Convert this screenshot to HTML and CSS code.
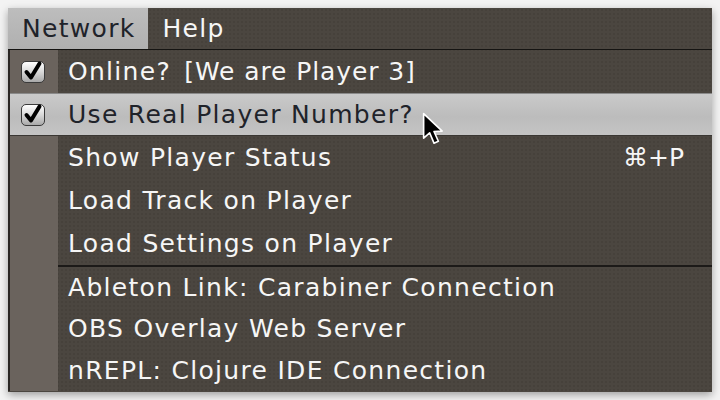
FILE: index.html
```html
<!DOCTYPE html>
<html lang="en">
  <head>
    <meta charset="UTF-8" />
    <meta name="viewport" content="width=device-width, initial-scale=1.0" />
    <title>Network Menu</title>
    <link rel="stylesheet" href="styles.css">
  </head>
  <body>
    <div class="window">
      <div class="menubar">
        <span class="menubar-item open">Network</span>
        <span class="menubar-item">Help</span>
      </div>

      <ul class="menu">
        <li class="menu-item">
          <span class="gutter"><span class="checkbox"><svg viewBox="0 0 22 20"><path d="M4.5 10 L9 15.5 L17.5 1.5" /></svg></span></span>
          <span class="label">Online? <span class="tight">[We are Player 3]</span></span>
        </li>
        <li class="menu-item active">
          <span class="gutter"><span class="checkbox"><svg viewBox="0 0 22 20"><path d="M4.5 10 L9 15.5 L17.5 1.5" /></svg></span></span>
          <span class="label">Use Real Player Number?</span>
        </li>
        <li class="menu-item">
          <span class="gutter"></span>
          <span class="label">Show Player Status</span>
          <span class="shortcut">&#8984;+P</span>
        </li>
        <li class="menu-item">
          <span class="gutter"></span>
          <span class="label">Load Track on Player</span>
        </li>
        <li class="menu-item">
          <span class="gutter"></span>
          <span class="label">Load Settings on Player</span>
        </li>
        <!-- separator -->
        <li class="menu-item sep small">
          <span class="gutter"></span>
          <span class="label">Ableton Link: Carabiner Connection</span>
        </li>
        <li class="menu-item small">
          <span class="gutter"></span>
          <span class="label">OBS Overlay Web Server</span>
        </li>
        <li class="menu-item small">
          <span class="gutter"></span>
          <span class="label">nREPL: Clojure IDE Connection</span>
        </li>
      </ul>

      <svg class="cursor" viewBox="0 0 22 32" width="24" height="35">
        <path d="M1.5 1.5 L1.5 24 L7 19 L11 28.5 L15 26.8 L11 17.8 L18.5 17.5 Z" />
      </svg>
    </div>
  </body>
</html>
```

FILE: styles.css
```css
* {
  margin: 0;
  padding: 0;
  box-sizing: border-box;
}

body {
  background-color: #f3f3f3;
  font-family: "DejaVu Sans", "Liberation Sans", sans-serif;
  font-size: 25px;
  letter-spacing: 1.3px;
}

.window {
  position: relative;
  width: 704px;
  height: 384px;
  margin: 8px;
  background-color: #4b4640;
  background-image: radial-gradient(rgba(0, 0, 0, 0.07) 1px, transparent 1.2px);
  background-size: 4px 4px;
  box-shadow: 0 3px 8px rgba(0, 0, 0, 0.35);
  overflow: hidden;
}

.menubar {
  display: flex;
  height: 42px;
  border-bottom: 1px solid #151412;
}

.menubar-item {
  display: flex;
  align-items: center;
  padding: 0 13px 0 14px;
  color: #f6f6f6;
}

.menubar-item.open {
  background: linear-gradient(#bdbdbd, #b0b0b0);
  color: #1f232a;
}

.menu {
  list-style: none;
  border-left: 2px solid #2a2724;
}

.menu-item {
  display: flex;
  align-items: center;
  height: 43px;
  color: #f6f6f6;
}

.menu-item.small {
  height: 42px;
}

.gutter {
  display: flex;
  align-items: center;
  width: 48px;
  height: 100%;
  padding-left: 11px;
  background-color: #6a635d;
}

.label {
  flex: 1;
  padding-left: 10px;
  white-space: pre;
}

.tight {
  margin-left: 4px;
  letter-spacing: 0.9px;
}

.shortcut {
  padding-right: 28px;
  letter-spacing: 0;
}

.menu-item.active {
  background: linear-gradient(#cacaca, #bcbcbc 55%, #c4c4c4);
  border-top: 1px solid #8a8a8a;
  border-bottom: 1px solid #3a3733;
  color: #1f232a;
}

.menu-item.active .gutter {
  background: transparent;
}

.menu-item.sep .label {
  height: 100%;
  display: flex;
  align-items: center;
  border-top: 2px solid #1c1a18;
}

.checkbox {
  display: block;
  width: 24px;
  height: 22px;
  border: 1px solid #3a3a3a;
  border-radius: 5px;
  background: linear-gradient(#ffffff, #d8d8d8 50%, #a9a9a9);
}

.checkbox svg {
  display: block;
  width: 22px;
  height: 20px;
  overflow: visible;
}

.checkbox path {
  fill: none;
  stroke: #000;
  stroke-width: 4;
  stroke-linecap: round;
  stroke-linejoin: round;
}

.cursor {
  position: absolute;
  left: 414px;
  top: 104px;
}

.cursor path {
  fill: #000;
  stroke: #fff;
  stroke-width: 1.5;
  stroke-linejoin: round;
}
```
